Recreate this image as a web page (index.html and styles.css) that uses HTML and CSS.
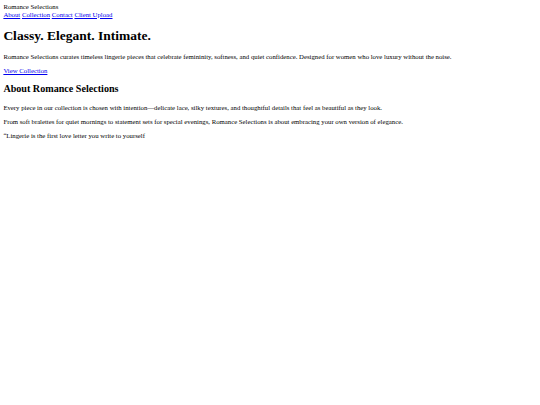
FILE: index.html
```html
<!DOCTYPE html>
<html lang="en">
<head>
<meta charset="utf-8">
<title>Romance Selections</title>
<link rel="stylesheet" href="styles.css">
</head>
<body class="page">
<header class="site-header">
  <div class="brand">Romance Selections</div>
  <nav class="nav">
    <a class="nav-link" href="#about">About</a>
    <a class="nav-link" href="#collection">Collection</a>
    <a class="nav-link" href="#contact">Contact</a>
    <a class="nav-link" href="#upload">Client Upload</a>
  </nav>
</header>
<main class="content">
  <section class="hero">
    <h1 class="hero-title">Classy. Elegant. Intimate.</h1>
    <p class="text">Romance Selections curates timeless lingerie pieces that celebrate femininity, softness, and quiet confidence. Designed for women who love luxury without the noise.</p>
    <p class="text"><a class="cta" href="#collection">View Collection</a></p>
  </section>
  <section class="about" id="about">
    <h2 class="section-title">About Romance Selections</h2>
    <p class="text">Every piece in our collection is chosen with intention—delicate lace, silky textures, and thoughtful details that feel as beautiful as they look.</p>
    <p class="text">From soft bralettes for quiet mornings to statement sets for special evenings, Romance Selections is about embracing your own version of elegance.</p>
    <p class="text">“Lingerie is the first love letter you write to yourself</p>
  </section>
</main>
</body>
</html>
```
FILE: styles.css
```css
html {
  background: #ffffff;
}
.page {
  margin: 3.375px;
  font-family: "Liberation Serif", "Times New Roman", serif;
  font-size: 6.75px;
  line-height: 7.4px;
  color: #000000;
}
.nav-link,
.cta {
  color: #0000ee;
  text-decoration: underline;
}
.hero-title {
  font-size: 13.5px;
  line-height: 1.15;
  font-weight: bold;
  margin: 10.2px 0 9.4px;
}
.section-title {
  font-size: 10.125px;
  line-height: 1.15;
  font-weight: bold;
  margin: 8.8px 0;
}
.text {
  margin: 6.6px 0;
}
```
